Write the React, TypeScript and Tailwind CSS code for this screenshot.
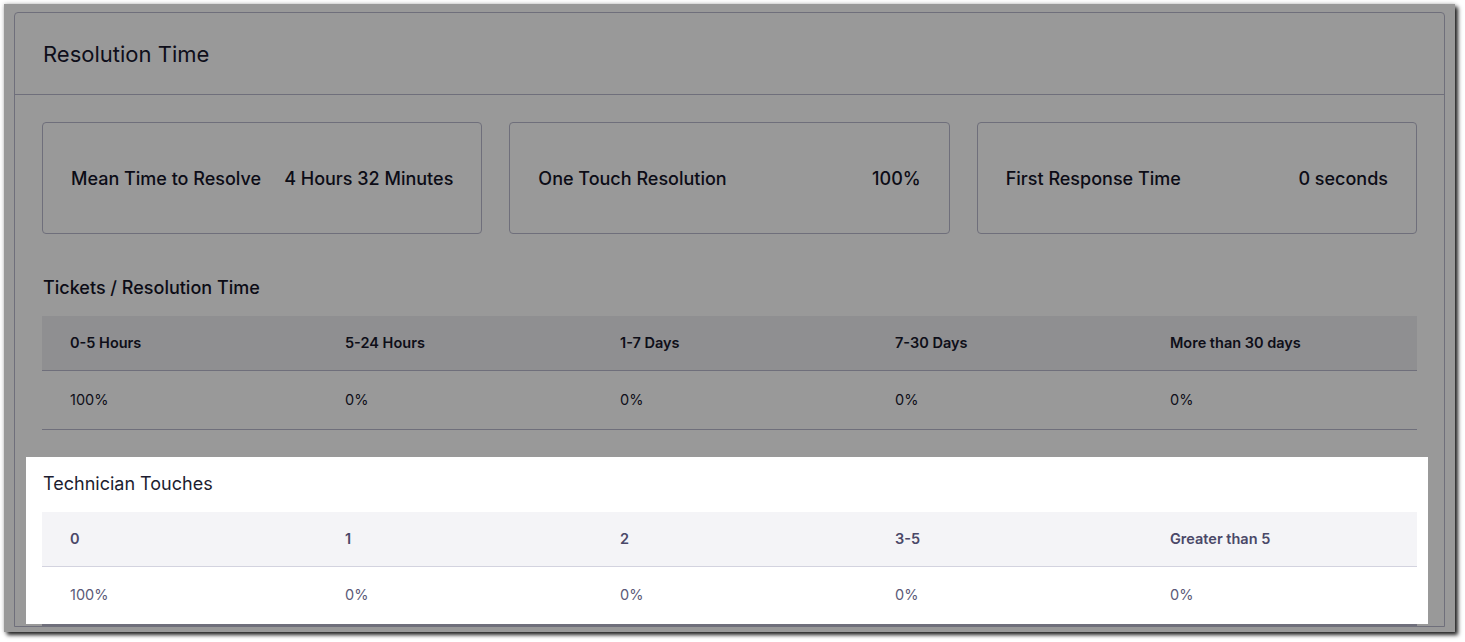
import * as React from 'react';

const stats = [
  { label: 'Mean Time to Resolve', value: '4 Hours 32 Minutes' },
  { label: 'One Touch Resolution', value: '100%' },
  { label: 'First Response Time', value: '0 seconds' },
];

const resolution = {
  heads: ['0-5 Hours', '5-24 Hours', '1-7 Days', '7-30 Days', 'More than 30 days'],
  values: ['100%', '0%', '0%', '0%', '0%'],
};

const touches = {
  heads: ['0', '1', '2', '3-5', 'Greater than 5'],
  values: ['100%', '0%', '0%', '0%', '0%'],
};

function StatCard({ label, value }: { label: string; value: string }) {
  return (
    <div className="flex h-[112px] items-center justify-between rounded-[4px] border border-[#6f6f7b] px-[28px] pt-px text-[18px] font-medium text-[#0c0c16]">
      <span>{label}</span>
      <span>{value}</span>
    </div>
  );
}

export default function App() {
  return (
    <div
      className="min-h-screen bg-white pl-[4px] pt-[4px]"
      style={{ fontFamily: 'Inter, "Noto Sans", sans-serif' }}
    >
      <div className="h-[628px] w-[1451px] overflow-hidden bg-[#999999] shadow-[3px_3px_4px_rgba(0,0,0,0.85),0_0_4px_rgba(0,0,0,0.25)]">
        <div className="mx-[10px] mt-[8px] rounded-t-[4px] border border-[#6f6f7b]">
          <div className="flex h-[82px] items-center border-b border-[#6f6f7b] px-[28px] pt-px">
            <h1 className="text-[22px] font-normal text-[#0e0e1a]">Resolution Time</h1>
          </div>

          <div className="px-[27px] pt-[27px]">
            <div className="grid grid-cols-3 gap-[27px]">
              {stats.map((s) => (
                <StatCard key={s.label} {...s} />
              ))}
            </div>

            {/* tickets / resolution time (dimmed) */}
            <h2 className="mt-[42px] mb-4 h-6 pl-px text-[18px] leading-6 font-medium text-[#0c0c16]">
              Tickets / Resolution Time
            </h2>
            <div className="grid h-[55px] grid-cols-5 items-center border-b border-[#6f6f7b] bg-[#8f8f91] text-[14.5px] font-semibold text-[#0e0e18]">
              {resolution.heads.map((h) => (
                <div key={h} className="pl-[28px]">{h}</div>
              ))}
            </div>
            <div className="grid h-[59px] grid-cols-5 items-center border-b border-[#6f6f7b] pb-px text-[14.5px] text-[#0e0e18]">
              {resolution.values.map((v, i) => (
                <div key={i} className="pl-[28px]">{v}</div>
              ))}
            </div>

            {/* technician touches (highlighted) */}
            <div className="mt-[27px] -mr-[11px] -ml-[16px] bg-white pt-[15px] pr-[11px] pl-[16px]">
              <h2 className="mb-4 h-6 pl-px text-[18px] leading-6 font-normal text-[#1d1d30]">
                Technician Touches
              </h2>
              <div className="grid h-[55px] grid-cols-5 items-center border-b border-[#d3d3df] bg-[#f4f4f7] text-[14.5px] font-semibold text-[#4a4868]">
                {touches.heads.map((h) => (
                  <div key={h} className="pl-[28px]">{h}</div>
                ))}
              </div>
              <div className="grid h-[57px] grid-cols-5 items-center pb-px text-[14.5px] text-[#5b5a78]">
                {touches.values.map((v, i) => (
                  <div key={i} className="pl-[28px]">{v}</div>
                ))}
              </div>
            </div>
            <div className="border-b-2 border-[#6f6f7b]" />
          </div>
        </div>
      </div>
    </div>
  );
}
